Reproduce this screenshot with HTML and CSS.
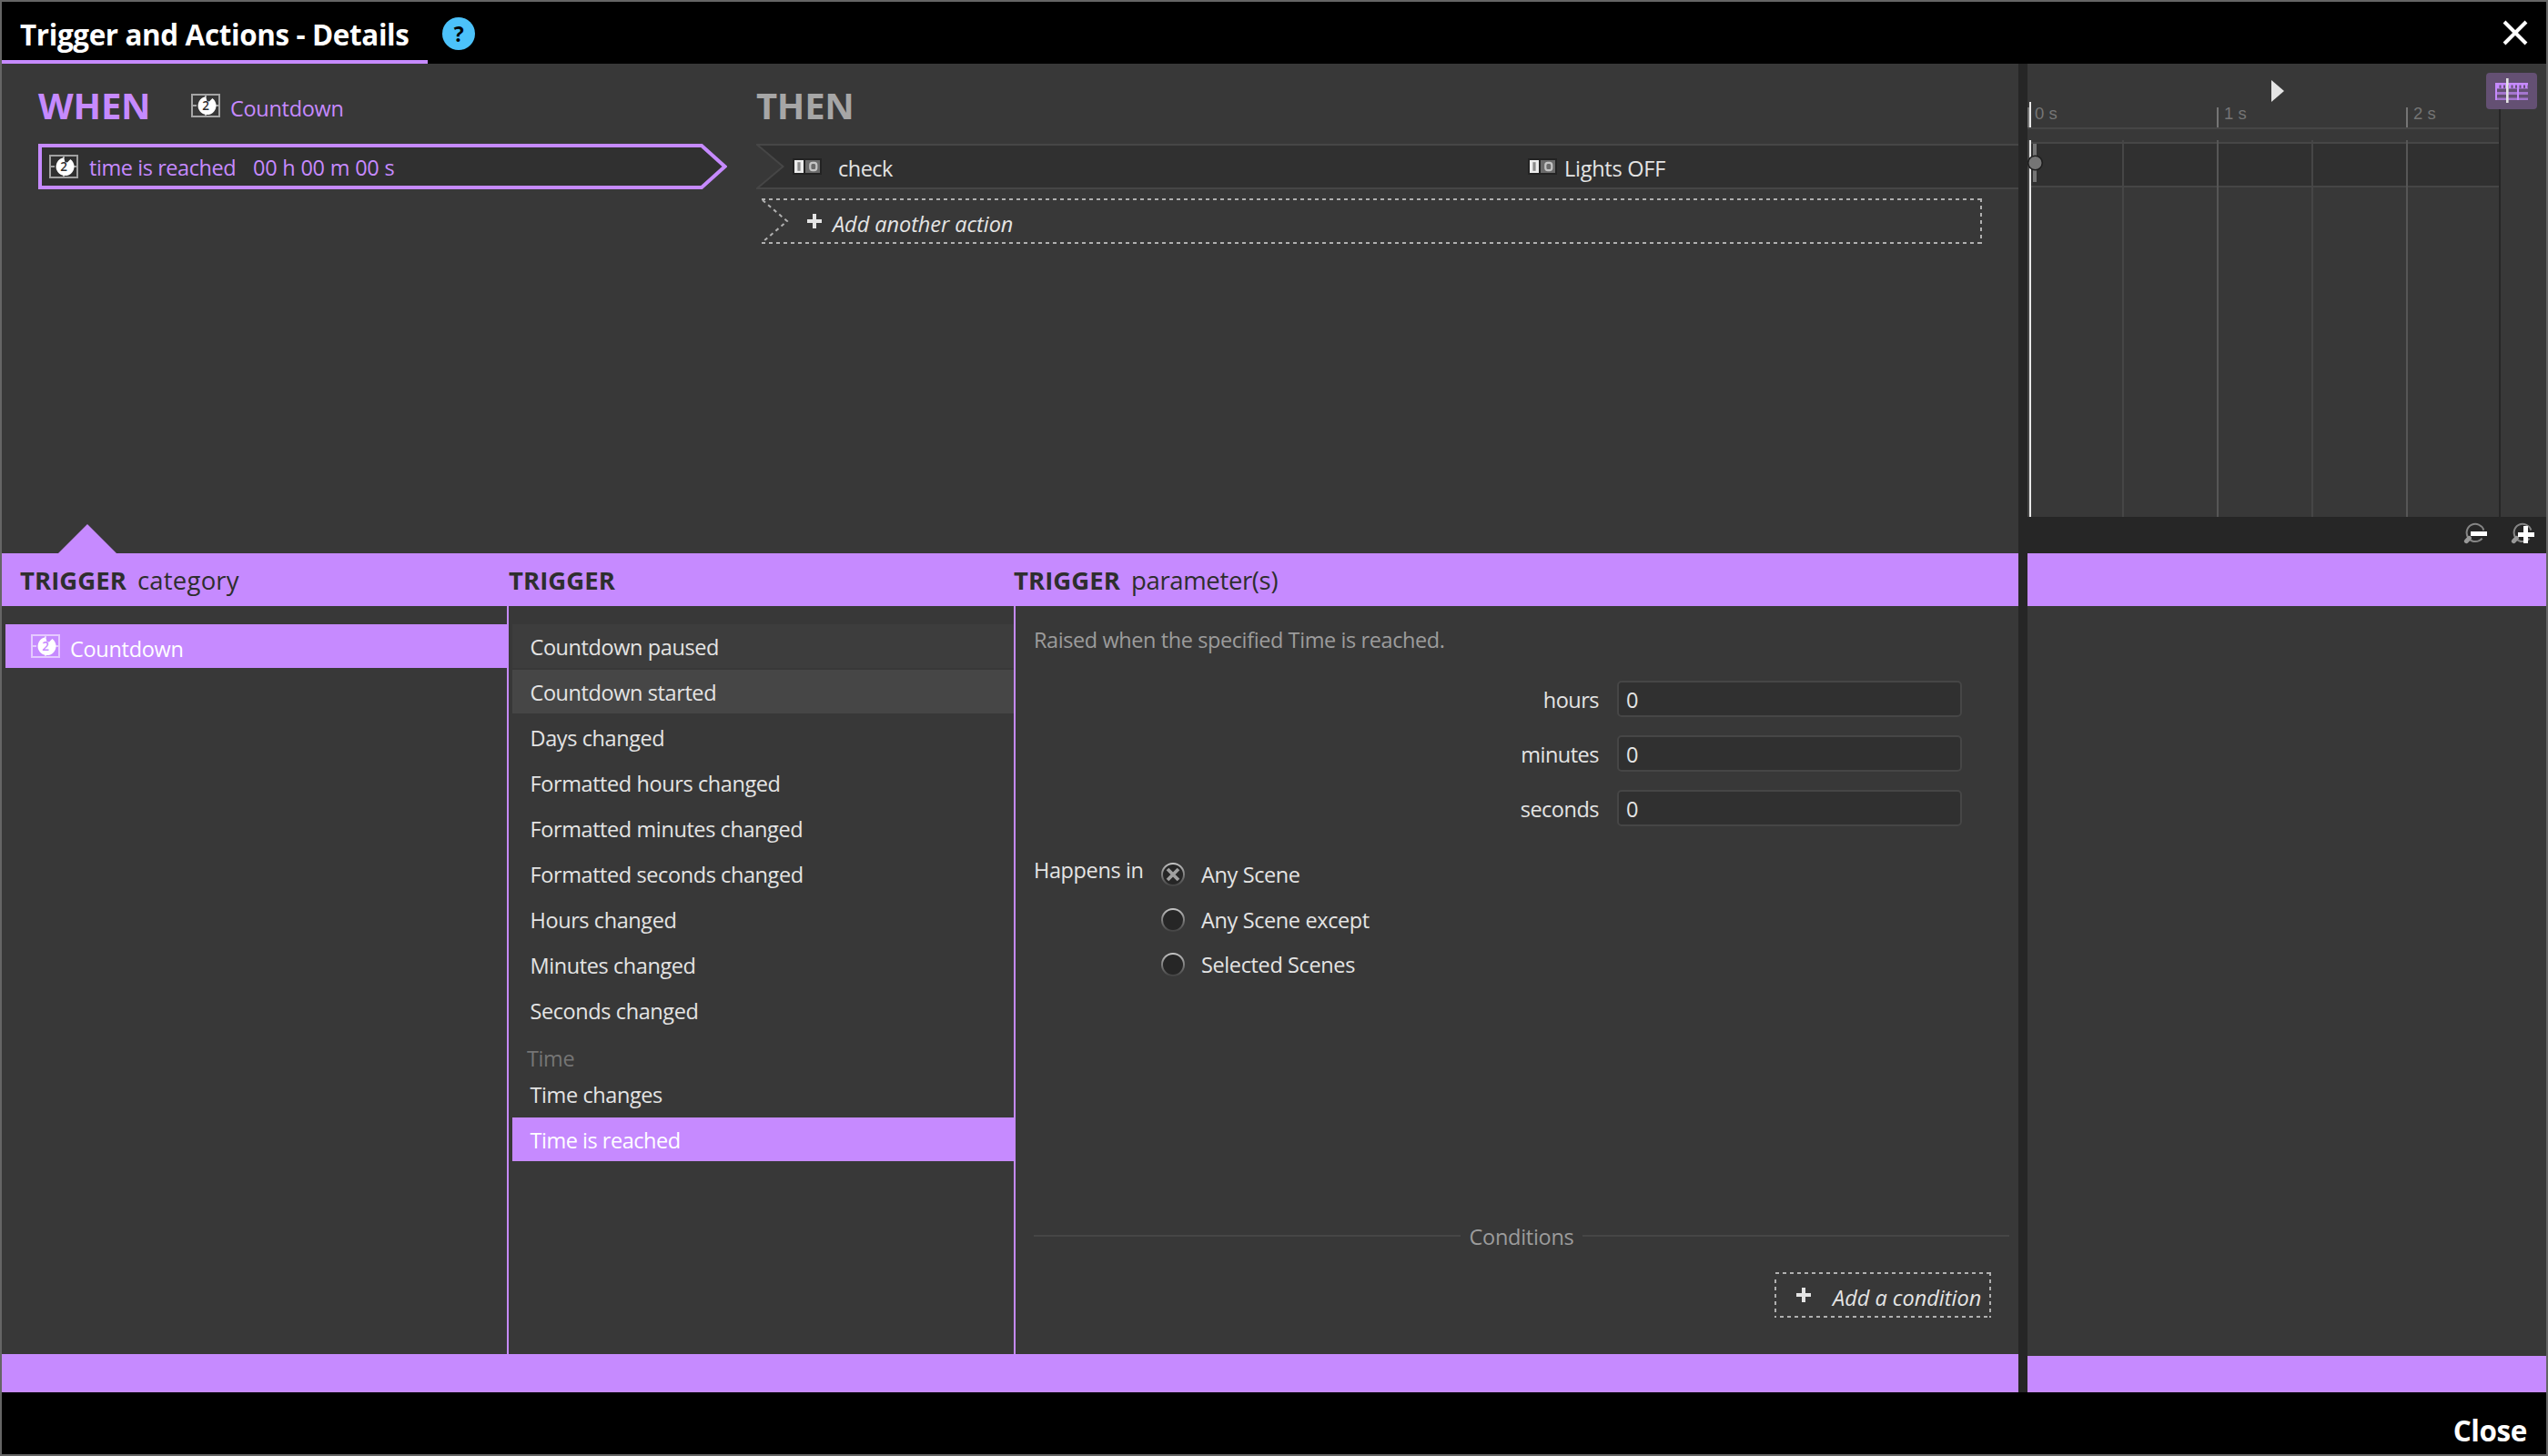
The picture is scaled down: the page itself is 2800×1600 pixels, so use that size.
FILE: index.html
```html
<!DOCTYPE html>
<html lang="en">
<head>
<meta charset="utf-8">
<title>Trigger and Actions - Details</title>
<link rel="stylesheet" href="styles.css">
</head>
<body>
<svg class="defs" width="0" height="0" aria-hidden="true">
  <symbol id="countdown" viewBox="0 0 32 26">
    <path d="M1 1H31V25H1Z M16 1V4 M16 22V25 M1 13H6 M26 13H31" fill="none" stroke="#fff" stroke-opacity=".55" stroke-width="2"/>
    <path d="M16.2 3.2L17.5 8.2L20 8.6L23.4 5A10 10 0 1 1 16.2 3.2Z" fill="#fff"/>
    <text x="12.2" y="18.4" font-size="13.5" class="digit">2</text>
  </symbol>
  <symbol id="switch" viewBox="0 0 32 18">
    <rect width="32" height="18" fill="#232323"/>
    <rect x="2" y="2" width="10" height="14" fill="#ececec"/>
    <rect x="5.4" y="4.2" width="3.2" height="9.6" fill="#8a8a8a"/>
    <rect x="14" y="2" width="16" height="14" fill="#6a6a6a"/>
    <rect x="19.3" y="4.8" width="7" height="8.4" rx="2.6" fill="none" stroke="#c4c4c4" stroke-width="2.2"/>
  </symbol>
  <symbol id="plus" viewBox="0 0 16 16">
    <path d="M6 0H10V6H16V10H10V16H6V10H0V6H6Z" fill="#e4e4e4"/>
  </symbol>
  <symbol id="lens" viewBox="0 0 24 24">
    <path d="M22.4 8.6A9.6 9.6 0 1 0 20.6 17.6" fill="none" stroke="#858585" stroke-width="2"/>
    <path d="M6.4 17.4L3.4 20.6" stroke="#999" stroke-width="5" stroke-linecap="round"/>
  </symbol>
</svg>

<div class="window">
  <header class="titlebar">
    <h1 class="title">Trigger and Actions - Details</h1>
    <span class="help">?</span>
    <svg class="close-x" width="28" height="28" viewBox="0 0 28 28"><path d="M2 2L26 26M26 2L2 26" stroke="#fff" stroke-width="4"/></svg>
  </header>

  <main class="body">
    <div class="main">
      <section class="rules">
        <div class="when">
          <div class="heading">
            <h2 class="when-title">WHEN</h2>
            <svg class="icon" width="32" height="26"><use href="#countdown"/></svg>
            <span class="source">Countdown</span>
          </div>
          <div class="trigger-row">
            <svg class="shape" width="757" height="50" viewBox="0 0 757 50"><path d="M2 2H729L754.5 25L729 48H2Z" fill="#303030" stroke="#c68aff" stroke-width="4"/></svg>
            <svg class="icon" width="32" height="26"><use href="#countdown"/></svg>
            <span class="trigger-name">time is reached</span>
            <span class="trigger-time">00 h 00 m 00 s</span>
          </div>
        </div>
        <div class="then">
          <div class="heading"><h2 class="then-title">THEN</h2></div>
          <div class="action-row">
            <svg class="shape" width="1387" height="50" viewBox="0 0 1387 50"><path d="M1 1H1390V49H1L29.5 25Z" fill="#303030" stroke="#464646" stroke-width="2"/></svg>
            <span class="action-source"><svg width="32" height="18"><use href="#switch"/></svg><span class="check">check</span></span>
            <span class="action-target"><svg width="32" height="18"><use href="#switch"/></svg><span class="lights">Lights OFF</span></span>
          </div>
          <div class="add-action">
            <svg class="shape" width="1341" height="50" viewBox="0 0 1341 50"><path d="M0 1H1341 M1340 0V50 M0 49H1341 M1 2L28 25L1 48" fill="none" stroke="#b0b0b0" stroke-width="2" stroke-dasharray="4 4"/></svg>
            <svg width="16" height="16"><use href="#plus"/></svg>
            <span class="add-action-text">Add another action</span>
          </div>
        </div>
        <svg class="pointer" width="64" height="32" viewBox="0 0 64 32"><path d="M0 32L32 0L64 32Z" fill="#c68aff"/></svg>
      </section>

      <div class="band heads">
        <div class="head"><b>TRIGGER</b><span class="category">category</span></div>
        <div class="head"><b>TRIGGER</b></div>
        <div class="head"><b>TRIGGER</b><span class="params-word">parameter(s)</span></div>
      </div>

      <section class="columns">
        <div class="categories">
          <div class="category-row"><svg class="icon" width="32" height="26"><use href="#countdown"/></svg><span>Countdown</span></div>
        </div>
        <div class="triggers">
          <div class="item faint">Countdown paused</div>
          <div class="item hover">Countdown started</div>
          <div class="item">Days changed</div>
          <div class="item">Formatted hours changed</div>
          <div class="item">Formatted minutes changed</div>
          <div class="item">Formatted seconds changed</div>
          <div class="item">Hours changed</div>
          <div class="item">Minutes changed</div>
          <div class="item">Seconds changed</div>
          <div class="group">Time</div>
          <div class="item">Time changes</div>
          <div class="item selected">Time is reached</div>
        </div>
        <div class="params">
          <p class="description">Raised when the specified Time is reached.</p>
          <div class="fields">
            <div class="field"><label>hours</label><div class="input">0</div></div>
            <div class="field"><label>minutes</label><div class="input">0</div></div>
            <div class="field"><label>seconds</label><div class="input">0</div></div>
          </div>
          <div class="scenes">
            <span class="scenes-label">Happens in</span>
            <div class="options">
              <div class="option"><span class="radio"><svg width="22" height="22" viewBox="0 0 22 22"><path d="M5 5L17 17M17 5L5 17" stroke="#a0a0a0" stroke-width="3.8"/></svg></span>Any Scene</div>
              <div class="option"><span class="radio"></span>Any Scene except</div>
              <div class="option"><span class="radio"></span>Selected Scenes</div>
            </div>
          </div>
          <div class="conditions"><i></i><span>Conditions</span><i></i></div>
          <div class="add-condition">
            <svg class="shape" width="238" height="50" viewBox="0 0 238 50"><path d="M1 1H238 M1 8V50 M237 0V50 M6 49H238" fill="none" stroke="#b0b0b0" stroke-width="2" stroke-dasharray="4 4"/></svg>
            <svg width="16" height="16"><use href="#plus"/></svg>
            <span class="add-condition-text">Add a condition</span>
          </div>
        </div>
      </section>
      <div class="band foot"></div>
    </div>

    <div class="divider"></div>

    <aside class="side">
      <div class="player">
        <svg width="14" height="24" viewBox="0 0 14 24"><path d="M0 0L14 12L0 24Z" fill="#e4e4e4"/></svg>
        <div class="timeline-toggle">
          <svg width="36" height="28" viewBox="0 0 36 28">
            <g fill="#c68aff">
              <path d="M0 5H36V7.5H0Z"/>
              <path d="M2 7H4.5V11H2Z M6.5 7H9V11H6.5Z M11 7H13V11H11Z M15 7H17.5V11H15Z M19.5 7H22V11H19.5Z M24 7H26.5V11H24Z M28.5 7H31V11H28.5Z M33 7H35.5V11H33Z"/>
              <path d="M0 5H2V24H0Z M24 5H26V24H24Z"/>
              <path d="M0 15H36V18H0Z M0 21.5H36V24H0Z" opacity=".65"/>
              <path d="M0 10.5H36V12H0Z" opacity=".4"/>
            </g>
            <path d="M12 0H14.6V27H12Z" fill="#e4e4e4"/>
          </svg>
        </div>
      </div>
      <svg class="timeline" width="520" height="458" viewBox="0 0 520 458">
        <rect x="0" y="48" width="518" height="46" fill="#303030"/>
        <g fill="#464646">
          <rect x="0" y="30" width="518" height="2"/>
          <rect x="0" y="46" width="518" height="2"/>
          <rect x="0" y="94" width="518" height="2"/>
          <rect x="104" y="44" width="2" height="414"/>
          <rect x="312" y="44" width="2" height="414"/>
          <rect x="0" y="44" width="2" height="414"/>
        </g>
        <g fill="#565656"><rect x="208" y="44" width="2" height="414"/><rect x="416" y="44" width="2" height="414"/></g>
        <g fill="#757575"><rect x="0" y="8" width="2" height="22"/><rect x="208" y="8" width="2" height="22"/><rect x="416" y="8" width="2" height="22"/></g>
        <rect x="518" y="8" width="2" height="450" fill="#262626"/>
        <g class="ruler"><text x="8" y="21">0 s</text><text x="216" y="21">1 s</text><text x="424" y="21">2 s</text></g>
        <rect x="6" y="48" width="4" height="42" fill="#757575"/>
        <rect x="2" y="2" width="2" height="28" fill="#e8e8e8"/>
        <rect x="2" y="44" width="2" height="414" fill="#e8e8e8"/>
        <circle cx="8.5" cy="69" r="7.8" fill="#757575" stroke="#1e1e1e" stroke-width="1.6"/>
      </svg>
      <div class="zoombar">
        <svg width="28" height="26" viewBox="0 0 28 26"><use href="#lens" width="24" height="24"/><path d="M8 10H26V15H8Z" fill="#fff"/></svg>
        <svg width="28" height="26" viewBox="0 0 28 26"><use href="#lens" width="24" height="24"/><path d="M14 4H19V11H26V16H19V23H14V16H8V11H14Z" fill="#fff"/></svg>
      </div>
      <div class="band"></div>
      <div class="side-space"></div>
      <div class="side-foot"></div>
    </aside>
  </main>

  <footer class="footer"><span>Close</span></footer>
</div>
</body>
</html>
```
FILE: styles.css
```css
* { box-sizing: border-box; margin: 0; padding: 0; }

body {
  width: 2800px;
  height: 1600px;
  overflow: hidden;
  background: #383838;
  color: #e4e4e4;
  font: 400 23.5px/32px "Open Sans", "Noto Sans", sans-serif;
  letter-spacing: -0.38px;
  white-space: nowrap;
}

svg { display: block; flex: none; }
svg.defs { display: none; }
.digit { font-family: "Open Sans", sans-serif; font-weight: 600; letter-spacing: 0; fill: var(--digit, #303030); }

.window {
  display: flex;
  flex-direction: column;
  width: 2800px;
  height: 1600px;
  border: 2px solid #656565;
}

/* Title bar */
.titlebar { display: flex; align-items: center; height: 68px; background: #000; color: #fff; }
.title {
  width: 468px;
  height: 68px;
  padding: 7px 0 0 20px;
  border-bottom: 4px solid #c68aff;
  font-size: 31.4px;
  line-height: 58px;
  letter-spacing: -0.37px;
}
.help {
  width: 36px;
  height: 36px;
  margin: 1px 0 0 16px;
  border-radius: 50%;
  background: #4cc2fa;
  color: #000;
  font-size: 23px;
  font-weight: 700;
  line-height: 37px;
  text-align: center;
}
.close-x { margin: 0 20px 0 auto; }

.body { display: flex; height: 1460px; }
.main { display: flex; flex-direction: column; width: 2216px; }
.divider { width: 10px; background: #262626; }
.side { display: flex; flex-direction: column; width: 570px; }

/* Rules */
.rules { position: relative; display: flex; height: 538px; }
.when { width: 829px; padding-left: 40px; }
.heading { display: flex; align-items: center; height: 88px; padding-top: 3px; }
.when-title, .then-title { width: 168px; font-size: 40px; line-height: 56px; }
.when-title { color: #c68aff; letter-spacing: -0.2px; }
.then-title { color: #a6a6a6; letter-spacing: -0.3px; }
.source { margin: 7px 0 0 11px; color: #c68aff; letter-spacing: -0.3px; }
.shape { position: absolute; left: 0; top: 0; z-index: -1; }
.trigger-row, .action-row, .add-action, .add-condition { position: relative; z-index: 0; display: flex; align-items: center; height: 50px; }
.trigger-row { width: 757px; padding-left: 12px; color: #c68aff; }
.trigger-name { width: 180px; margin: 2px 0 0 12px; letter-spacing: -0.43px; }
.trigger-time { padding-top: 2px; letter-spacing: -0.22px; }
.action-row { width: 1387px; padding: 0 0 0 40px; }
.action-source, .action-target { display: flex; align-items: center; }
.action-source { width: 808px; }
.check { margin: 4px 0 0 18px; letter-spacing: -0.5px; }
.lights { margin: 4px 0 0 8px; letter-spacing: -0.25px; }
.add-action { width: 1341px; margin: 10px 0 0 6px; padding-left: 50px; }
.add-action-text { margin: 6px 0 0 12px; font-style: italic; letter-spacing: -0.05px; }
.pointer { position: absolute; left: 62px; bottom: 0; }

/* Bands */
.band { height: 58px; flex: none; background: #c68aff; }
.foot { height: 42px; }
.heads { display: flex; padding-left: 20px; color: #2e2e2e; font-size: 27.5px; line-height: 58px; }
.head { display: flex; width: 537px; padding-top: 1px; }
.head + .head { width: 555px; }
.head b { width: 129px; font-size: 27.5px; letter-spacing: 0.05px; }
.category { letter-spacing: 0.2px; }
.params-word { letter-spacing: -0.35px; }

/* Columns */
.columns { display: flex; height: 822px; }
.categories { width: 555px; padding: 20px 0 0 4px; }
.category-row {
  --digit: #c68aff;
  display: flex;
  align-items: center;
  height: 48px;
  padding-left: 28px;
  background: #c68aff;
  color: #fff;
  letter-spacing: -0.3px;
}
.category-row span { margin: 6px 0 0 11px; }
.triggers { width: 557px; padding: 20px 0 0 4px; border-left: 2px solid #c68aff; }
.item { height: 48px; margin-bottom: 2px; padding: 2px 0 0 19.5px; line-height: 47px; letter-spacing: -0.41px; }
.faint { background: #3d3d3d; }
.hover { background: #464646; }
.selected { background: #c68aff; color: #fff; letter-spacing: -0.48px; }
.group { height: 42px; padding: 11px 0 0 16px; color: #757575; }

.params { display: flex; flex-direction: column; flex: 1; padding: 21px 10px 40px 20px; border-left: 2px solid #c68aff; }
.description { color: #9c9c9c; letter-spacing: -0.41px; }
.fields { display: grid; gap: 20px; justify-content: end; margin: 29px 52px 0 0; }
.field { display: flex; justify-content: flex-end; gap: 20px; height: 40px; }
.field label { padding-top: 2px; line-height: 38px; letter-spacing: -0.5px; }
.input {
  width: 379px;
  height: 40px;
  padding-left: 8px;
  border: 2px solid #464646;
  border-radius: 5px;
  background: #303030;
  line-height: 38px;
}
.scenes { display: flex; margin-top: 28px; }
.scenes-label { width: 140px; padding-top: 4px; }
.option { display: flex; align-items: center; gap: 18px; height: 49.5px; padding-top: 0.5px; }
.radio {
  width: 26px;
  height: 26px;
  padding: 2px;
  border-radius: 50%;
  background: linear-gradient(#c8c8c8, #808080 50%, #404040);
}
.radio::before { content: ""; display: block; width: 22px; height: 22px; border-radius: 50%; background: #262626; }
.radio svg { margin-top: -22px; }
.conditions { display: flex; align-items: center; gap: 10px; margin-top: auto; color: #9c9c9c; letter-spacing: -0.29px; }
.conditions i { flex: 1; height: 2px; margin-bottom: 2px; background: #464646; }
.add-condition { align-self: flex-end; width: 238px; margin: 23px 20px 0 0; padding-left: 24px; }
.add-condition-text { margin: 6px 0 0 24px; font-style: italic; letter-spacing: 0; }

/* Timeline side */
.player { position: relative; height: 40px; padding: 18px 0 0 268px; }
.timeline-toggle {
  position: absolute;
  left: 504px;
  top: 10px;
  width: 56px;
  height: 40px;
  padding: 6px 10px;
  border-radius: 4px;
  background: #645073;
}
.ruler { font: 18.5px "Liberation Sans", Arial, sans-serif; letter-spacing: 0; fill: #757575; }
.zoombar { display: flex; flex: none; gap: 24px; height: 40px; padding: 6px 0 0 479px; background: #262626; }
.side-space { flex: 1; }
.side-foot { height: 40px; background: #c68aff; }

/* Footer */
.footer { display: flex; justify-content: flex-end; height: 68px; padding: 14px 21px 0 0; background: #000; color: #fff; font-size: 31.4px; font-weight: 700; line-height: 55px; }
```
